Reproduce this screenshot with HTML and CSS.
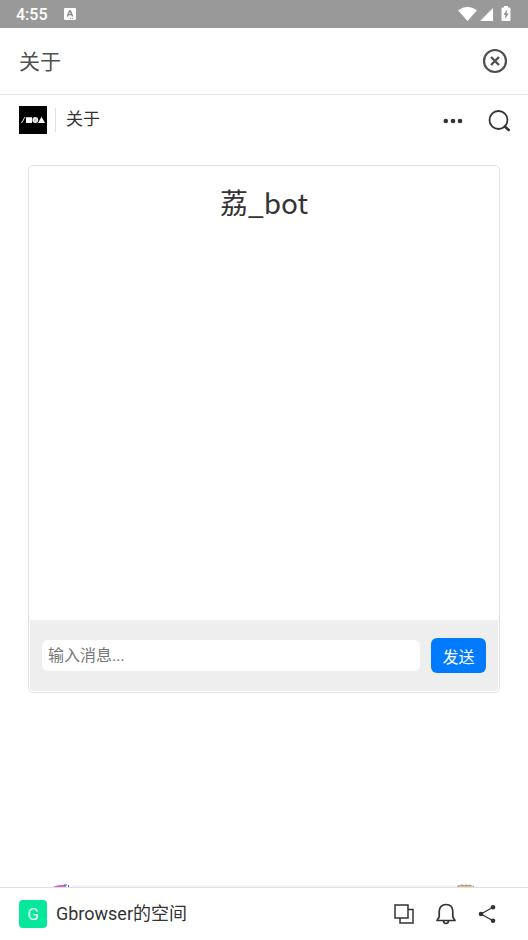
FILE: index.html
```html
<!DOCTYPE html>
<html lang="zh-CN">
<head>
<meta charset="utf-8">
<meta name="viewport" content="width=device-width, initial-scale=1">
<title>关于</title>
<link rel="stylesheet" href="styles.css">
</head>
<body>
<div class="status">
  <span class="clock">4:55</span>
  <svg class="notice" width="12" height="12" viewBox="0 0 12 12"><rect width="12" height="12" rx="1" fill="#fff"/><path d="M3.3 8.5 5.6 3h.8l2.2 5.5M4.3 6.6h3.4" fill="none" stroke="#888" stroke-width="1.4"/><path d="M6 10.5h1M8 10.5h1" stroke="#999"/></svg>
  <svg class="signals" width="54" height="16" viewBox="0 0 54 16" fill="#fff"><path d="M0 4.200Q9.500-2.800 19 4.200L9.500 15ZM22 15 35 2v13Z"/><path d="M46 1.500V0h4v1.500h1.500q1 0 1 1V14q0 1-1 1h-7q-1 0-1-1V2.500q0-1 1-1Z"/><path d="m49.300 3.500-3.800 5.200h2.200L46.800 13l3.900-5.500h-2.300Z" fill="#888"/></svg>
</div>
<header class="titlebar">
  <h1>关于</h1>
  <button class="icon" type="button" aria-label="关闭"><svg width="26" height="26" viewBox="0 0 26 26" fill="none" stroke="#505050" stroke-width="2.200"><circle cx="13" cy="13" r="11"/><path d="m9 9 8 8m0-8-8 8" stroke-width="2.400"/></svg></button>
</header>
<nav class="crumbs">
  <a class="logo" href="#" aria-label="主页"><svg width="28" height="28" viewBox="0 0 28 28"><path fill="#000" d="M0 0h28v28H0z"/><path d="m2.500 17 3.500-6" stroke="#ddd"/><path fill="#fff" d="M7 11.200h6V17H7zM19 17l3.500-6.200L26 17z"/><circle cx="16.300" cy="14" r="2.900" fill="#eee"/><path d="m14.800 12.600 3 2.800m0-2.800-3 2.800" stroke="#999" stroke-width=".6"/></svg></a>
  <span class="divider"></span>
  <a class="crumb" href="#">关于</a>
  <button class="icon" type="button" aria-label="更多"><svg width="20" height="24" viewBox="0 0 20 24" fill="#333"><circle cx="2.800" cy="13" r="2.300"/><circle cx="10" cy="13" r="2.300"/><circle cx="17" cy="13" r="2.300"/></svg></button>
  <button class="icon search" type="button" aria-label="搜索"><svg width="24" height="24" viewBox="0 0 24 24" fill="none" stroke="#333"><circle cx="11.500" cy="12" r="9" stroke-width="1.800"/><path d="m17.800 18.500 3.900 3.500" stroke-width="2.600" stroke-linecap="round"/></svg></button>
</nav>
<main>
  <section class="chat">
    <h2>荔_bot</h2>
    <div class="log"></div>
    <form class="composer">
      <input type="text" aria-label="消息" placeholder="输入消息...">
      <button class="send" type="button">发送</button>
    </form>
  </section>
  <div class="peek">
    <svg width="20" height="3" viewBox="0 0 20 3"><path d="M2 3Q6 .8 15 .8V3Z" fill="#c969c9"/><path d="M13 1h3M17.500 1v2" stroke="#5360c0"/></svg>
    <span></span>
    <svg width="20" height="3" viewBox="0 0 20 3"><path d="M2 3 4 1h9l4 2Z" fill="#efbb61"/><path d="M1 2.500 4 1.200h10l4 1.300" fill="none" stroke="#6975b5" stroke-width=".8" stroke-dasharray="3 1"/></svg>
  </div>
</main>
<footer class="bottom">
  <a class="space" href="#"><span class="avatar">G</span>Gbrowser的空间</a>
  <button class="icon" type="button" aria-label="复制"><svg width="20" height="20" viewBox="0 0 20 20" fill="none" stroke="#333" stroke-width="1.500"><path d="M1 1h13v13H1zM14 5.500h5V19H6v-5"/></svg></button>
  <button class="icon" type="button" aria-label="通知"><svg width="20" height="22" viewBox="0 0 20 22" fill="none" stroke="#333" stroke-width="1.700" stroke-linejoin="round"><path d="M1 17.500 3.200 14V8.500C3.200 4 6 1.500 10 1.500s6.800 2.500 6.800 7V14l2.200 3.500Z"/><path d="M7.500 18q.3 2.500 2.500 2.500t2.500-2.500"/></svg></button>
  <button class="icon" type="button" aria-label="分享"><svg width="18" height="20" viewBox="0 0 18 20" fill="#333"><path d="M15 3.300 3 10l12 6.700" fill="none" stroke="#333" stroke-width="1.300"/><circle cx="15" cy="3.300" r="2.300"/><circle cx="3" cy="10" r="2.300"/><circle cx="15" cy="16.700" r="2.300"/></svg></button>
</footer>
</body>
</html>
```
FILE: styles.css
```css
* { box-sizing: border-box; }

body {
  margin: 0;
  min-height: 100vh;
  display: flex;
  flex-direction: column;
  background: #fff;
  color: #333;
  font-family: Roboto, "Noto Sans CJK SC", sans-serif;
}

h1, h2 { margin: 0; font-weight: 400; }
a { color: inherit; text-decoration: none; }
svg { display: block; }
button, input { font: inherit; border: 0; }
.icon { padding: 0; background: none; }

.status {
  display: flex;
  align-items: center;
  height: 28px;
  padding: 0 16px;
  background: #999;
  color: #fff;
}
.clock { font-size: 16px; font-weight: 500; line-height: 28px; padding-top: 2px; }
.notice { margin-left: 16px; }
.signals { margin-left: auto; }

.titlebar {
  display: flex;
  align-items: center;
  justify-content: space-between;
  height: 67px;
  padding: 0 20px 0 19px;
  border-bottom: 1px solid #e8e8e8;
}
.titlebar h1 { padding-top: 2px; font-size: 21px; line-height: 32px; color: #505050; }

.crumbs {
  display: flex;
  align-items: center;
  height: 50px;
  padding: 0 17px 0 19px;
}
.divider { width: 1px; height: 24px; margin: 0 10px 0 8px; background: #e0e0e0; }
.crumb { margin-right: auto; padding-bottom: 2px; font-size: 17px; line-height: 24px; }
.search { margin-left: 24px; }

main { flex: 1; display: flex; flex-direction: column; padding: 20px 28px 0; }

.chat {
  padding: 1px;
  border: 1px solid #e2e2e2;
  border-radius: 5px;
}
.chat h2 {
  padding-top: 13px;
  font-family: "Noto Sans CJK SC", sans-serif;
  font-size: 28px;
  line-height: 44px;
  text-align: center;
}
.log { min-height: 396px; }
.composer {
  display: flex;
  align-items: center;
  gap: 11px;
  height: 71px;
  padding: 0 12px;
  background: #eee;
  border-radius: 0 0 4px 4px;
}
.composer input {
  flex: 1;
  min-width: 0;
  height: 31px;
  padding: 0 6px;
  border-radius: 6px;
  background: #fff;
  font-size: 16px;
}
.composer input::placeholder { color: #777; }
.send {
  width: 55px;
  height: 35px;
  padding: 0;
  border-radius: 6px;
  background: #007bff;
  color: #fff;
  font-size: 16px;
}

.peek { display: flex; align-items: flex-end; margin: auto 24px 0 23px; }
.peek span { flex: 1; height: 2px; background: #f8f4f6; }

.bottom {
  display: flex;
  align-items: center;
  gap: 22px;
  height: 53px;
  padding: 0 32px 0 19px;
  border-top: 1px solid #e2dde2;
}
.space {
  display: flex;
  align-items: center;
  gap: 9px;
  margin-right: auto;
  font-size: 18px;
  line-height: 24px;
}
.avatar {
  width: 28px;
  border-radius: 4px;
  background: #05e89c;
  color: #e8fff6;
  font-size: 17px;
  line-height: 28px;
  text-align: center;
}
```
